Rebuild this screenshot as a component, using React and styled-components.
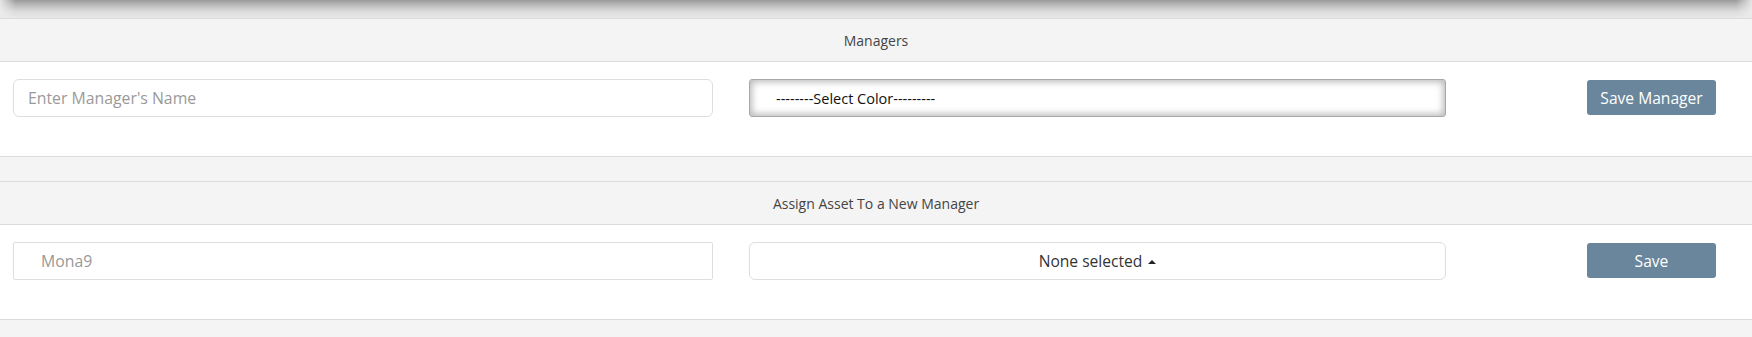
import React from 'react';
import styled, { createGlobalStyle } from 'styled-components';

const GlobalStyle = createGlobalStyle`
    html, body {
        margin: 0;
        padding: 0;
        background: #f4f4f4;
        font-family: "Open Sans", "Liberation Sans", sans-serif;
    }
`;

const Page = styled.div`
    width: 100%;
    min-height: 337px;
    background: #f4f4f4;
`;

// shadow cast by the bar above, fading at both ends
const TopShade = styled.div`
    height: 18px;
    background:
        linear-gradient(to right, rgba(236,236,236,0.9) 0px, rgba(236,236,236,0) 16px, rgba(236,236,236,0) calc(100% - 16px), rgba(236,236,236,0.9) 100%),
        linear-gradient(to bottom, #999 0%, #bcbcbc 30%, #dcdcdc 65%, #e8e8e8 100%);
`;

const Panel = styled.section`
    border-top: 1px solid #dcdcdc;
    border-bottom: 1px solid #dcdcdc;
    margin-bottom: ${p => p.gap || 0}px;
`;

const PanelHeading = styled.div`
    height: 42px;
    display: flex;
    align-items: center;
    justify-content: center;
    background: #f4f4f4;
    border-bottom: 1px solid #dcdcdc;
    font-size: 14px;
    color: #444;
`;

const PanelRow = styled.div`
    height: 94px;
    box-sizing: border-box;
    padding: 17px 36px 0 13px;
    background: #fff;
    display: flex;
    align-items: flex-start;
    gap: 36px;
`;

const TextInput = styled.input`
    width: ${p => p.w}px;
    height: 38px;
    box-sizing: border-box;
    border: 1px solid #dedede;
    border-radius: ${p => p.radius}px;
    padding: 0 0 0 ${p => p.indent}px;
    font-family: "Open Sans", "Liberation Sans", sans-serif;
    font-size: 15.8px;
    color: #999;
    background: #fff;
    outline: none;

    &::placeholder {
        color: #9a9a9a;
    }
`;

const ColorSelect = styled.div`
    width: 697px;
    height: 38px;
    box-sizing: border-box;
    border: 1px solid #a8a8a8;
    border-radius: 3px;
    background: #fff;
    box-shadow: inset 0 0 7px 2px rgba(0, 0, 0, 0.28);
    display: flex;
    align-items: center;
    padding-left: 26px;
    font-size: 14.5px;
    color: #111;
`;

const MultiSelect = styled.button`
    width: 697px;
    height: 38px;
    box-sizing: border-box;
    border: 1px solid #dedede;
    border-radius: 6px;
    background: #fff;
    display: flex;
    align-items: center;
    justify-content: center;
    gap: 6px;
    font-family: "Open Sans", "Liberation Sans", sans-serif;
    font-size: 15.6px;
    color: #333;
    cursor: pointer;
`;

const Caret = styled.span`
    width: 0;
    height: 0;
    border-left: 4px solid transparent;
    border-right: 4px solid transparent;
    border-bottom: 4px solid #222;
    margin-top: 1px;
`;

const ActionCell = styled.div`
    flex: 1;
    display: flex;
    justify-content: flex-end;
    padding-top: 1px;
`;

const SaveButton = styled.button`
    width: 129px;
    height: 35px;
    border: none;
    border-radius: 3px;
    background: #6a869c;
    color: #fff;
    font-family: "Open Sans", "Liberation Sans", sans-serif;
    font-size: 15.6px;
    cursor: pointer;
`;

export default function App() {
    return (
        <Page>
            <GlobalStyle />
            <TopShade />

            <Panel gap={24}>
                <PanelHeading>Managers</PanelHeading>
                <PanelRow>
                    <TextInput w={700} radius={6} indent={14} placeholder="Enter Manager's Name" />
                    <ColorSelect>--------Select Color---------</ColorSelect>
                    <ActionCell>
                        <SaveButton>Save Manager</SaveButton>
                    </ActionCell>
                </PanelRow>
            </Panel>

            <Panel>
                <PanelHeading>Assign Asset To a New Manager</PanelHeading>
                <PanelRow>
                    <TextInput w={700} radius={2} indent={27} defaultValue="Mona9" readOnly />
                    <MultiSelect>
                        None selected <Caret />
                    </MultiSelect>
                    <ActionCell>
                        <SaveButton>Save</SaveButton>
                    </ActionCell>
                </PanelRow>
            </Panel>
        </Page>
    );
}
